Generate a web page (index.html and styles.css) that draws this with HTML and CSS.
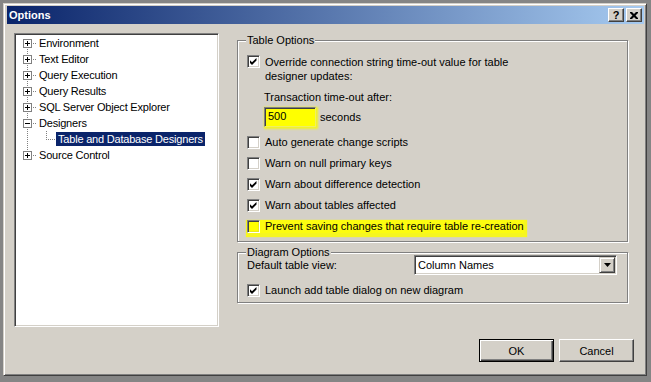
FILE: index.html
```html
<!DOCTYPE html>
<html>
<head>
<meta charset="utf-8">
<title>Options</title>
<link rel="stylesheet" href="styles.css">
</head>
<body>
<div class="window">
  <div class="titlebar">
    <span class="title">Options</span>
    <div class="caption-btns">
      <span class="cbtn help">?</span>
      <span class="cbtn close"><svg width="8" height="7" viewBox="0 0 8 7"><path d="M0 0h2l2 2 2-2h2v1L5.5 3.5 8 6v1H6L4 5 2 7H0V6l2.5-2.5L0 1z"/></svg></span>
    </div>
  </div>

  <div class="main">
    <div class="tree">
      <ul class="tree-list">
        <li class="node"><span class="twig first"><span class="box plus"></span></span><span class="label">Environment</span></li>
        <li class="node"><span class="twig"><span class="box plus"></span></span><span class="label">Text Editor</span></li>
        <li class="node"><span class="twig"><span class="box plus"></span></span><span class="label">Query Execution</span></li>
        <li class="node"><span class="twig"><span class="box plus"></span></span><span class="label">Query Results</span></li>
        <li class="node"><span class="twig"><span class="box plus"></span></span><span class="label">SQL Server Object Explorer</span></li>
        <li class="node"><span class="twig"><span class="box"></span></span><span class="label">Designers</span></li>
        <li class="node"><span class="indent"></span><span class="twig last"></span><span class="label selected">Table and Database Designers</span></li>
        <li class="node"><span class="twig last"><span class="box plus"></span></span><span class="label">Source Control</span></li>
      </ul>
    </div>

    <div class="right">
      <fieldset class="group g1">
        <legend>Table Options</legend>
        <div class="check-row override">
          <span class="cb"><svg width="7" height="7" viewBox="0 0 7 7"><path d="M0 2.2l2 2L6.5 0v2.6L2 7 0 5z"/></svg></span>
          <span class="text">Override connection string time-out value for table<br>designer updates:</span>
        </div>
        <div class="timeout">
          <div>Transaction time-out after:</div>
          <div class="timeout-input"><span class="textbox">500</span><span>seconds</span></div>
        </div>
        <div class="check-list">
          <div class="check-row"><span class="cb"></span><span class="text">Auto generate change scripts</span></div>
          <div class="check-row"><span class="cb"></span><span class="text">Warn on null primary keys</span></div>
          <div class="check-row"><span class="cb"><svg width="7" height="7" viewBox="0 0 7 7"><path d="M0 2.2l2 2L6.5 0v2.6L2 7 0 5z"/></svg></span><span class="text">Warn about difference detection</span></div>
          <div class="check-row"><span class="cb"><svg width="7" height="7" viewBox="0 0 7 7"><path d="M0 2.2l2 2L6.5 0v2.6L2 7 0 5z"/></svg></span><span class="text">Warn about tables affected</span></div>
          <div class="check-row hl"><span class="cb"></span><span class="text">Prevent saving changes that require table re-creation</span></div>
        </div>
      </fieldset>

      <fieldset class="group g2">
        <legend>Diagram Options</legend>
        <div class="view-row">
          <span class="view-label">Default table view:</span>
          <div class="combo">
            <span class="combo-text">Column Names</span>
            <span class="combo-btn"><svg width="7" height="4" viewBox="0 0 7 4"><path d="M0 0h7L3.5 4z"/></svg></span>
          </div>
        </div>
        <div class="check-row launch"><span class="cb"><svg width="7" height="7" viewBox="0 0 7 7"><path d="M0 2.2l2 2L6.5 0v2.6L2 7 0 5z"/></svg></span><span class="text">Launch add table dialog on new diagram</span></div>
      </fieldset>
    </div>
  </div>

  <div class="footer">
    <button class="btn default">OK</button>
    <button class="btn">Cancel</button>
  </div>
</div>
</body>
</html>
```
FILE: styles.css
```css
* { box-sizing: border-box; }
html, body { margin: 0; height: 100%; }
body {
  background: #858585;
  font: 11px/13px "Liberation Sans", Arial, sans-serif;
  color: #000;
  overflow: hidden;
}

.window {
  margin: 3px 0 0 3px;
  width: 644px;
  height: 373px;
  background: #d4d0c8;
  border: 1px solid;
  border-color: #d4d0c8 #404040 #404040 #d4d0c8;
  box-shadow: inset 1px 1px #fff, inset -1px -1px #808080;
  padding: 2px 2px 2px 3px;
  display: flex;
  flex-direction: column;
}

/* title bar */
.titlebar {
  flex: none;
  height: 18px;
  background: linear-gradient(to right, #0a246a, #a6caf0);
  display: flex;
  align-items: center;
  justify-content: space-between;
  padding: 0 2px;
}
.title { color: #fff; font-weight: bold; font-size: 11px; }
.caption-btns { display: flex; gap: 2px; }
.cbtn {
  width: 16px;
  height: 14px;
  background: #d4d0c8;
  border: 1px solid;
  border-color: #fff #404040 #404040 #fff;
  box-shadow: inset -1px -1px #808080;
  display: flex;
  align-items: center;
  justify-content: center;
  font: bold 11px/1 "Liberation Sans", Arial, sans-serif;
}
.cbtn svg { display: block; }

/* main area */
.main {
  flex: none;
  display: flex;
  gap: 18px;
  padding: 9px 0 0 7px;
}

/* tree */
.tree {
  flex: none;
  width: 205px;
  height: 294px;
  background: #fff;
  border: 1px solid;
  border-color: #808080 #fff #fff #808080;
  box-shadow: inset 1px 1px #404040, inset -1px -1px #d4d0c8;
  padding: 1px;
}
.tree-list { list-style: none; margin: 0; padding: 0 0 0 7px; }
.node { display: flex; align-items: center; height: 16px; }
.twig, .indent { flex: none; position: relative; height: 16px; }
.twig {
  width: 14px;
  background:
    repeating-linear-gradient(to right, #808080 0 1px, transparent 1px 2px) 4px 8px / 10px 1px no-repeat,
    repeating-linear-gradient(#808080 0 1px, transparent 1px 2px) 4px 0 / 1px 16px no-repeat;
}
.twig.first {
  background:
    repeating-linear-gradient(to right, #808080 0 1px, transparent 1px 2px) 4px 8px / 10px 1px no-repeat,
    repeating-linear-gradient(#808080 0 1px, transparent 1px 2px) 4px 8px / 1px 8px no-repeat;
}
.twig.last {
  background:
    repeating-linear-gradient(to right, #808080 0 1px, transparent 1px 2px) 4px 8px / 10px 1px no-repeat,
    repeating-linear-gradient(#808080 0 1px, transparent 1px 2px) 4px 0 / 1px 8px no-repeat;
}
.indent {
  width: 19px;
  background: repeating-linear-gradient(#808080 0 1px, transparent 1px 2px) 4px 0 / 1px 16px no-repeat;
}
.box {
  position: absolute;
  left: 0;
  top: 4px;
  width: 9px;
  height: 9px;
  border: 1px solid #808080;
  background: #fff;
}
.box::before {
  content: "";
  position: absolute;
  left: 1px;
  top: 3px;
  width: 5px;
  height: 1px;
  background: #000;
}
.box.plus::after {
  content: "";
  position: absolute;
  left: 3px;
  top: 1px;
  width: 1px;
  height: 5px;
  background: #000;
}
.label { padding: 0 2px; line-height: 14px; white-space: nowrap; letter-spacing: -0.2px; }
.label.selected { background: #0a246a; color: #fff; }

/* right side */
.right {
  flex: none;
  width: 391px;
  display: flex;
  flex-direction: column;
  gap: 4px;
  padding-top: 1px;
}
.group {
  margin: 0;
  min-width: 0;
  border: 1px solid #808080;
  box-shadow: inset 1px 1px #fff, 1px 1px #fff;
  padding: 0 9px 8px 9px;
}
.group legend {
  padding: 0 1px;
  margin-left: -1px;
  line-height: 13px;
  background: #d4d0c8;
}

.check-row { display: flex; align-items: flex-start; gap: 5px; }
.check-row .text { line-height: 13px; white-space: nowrap; }
.cb {
  flex: none;
  width: 13px;
  height: 13px;
  background: #fff;
  border: 1px solid;
  border-color: #808080 #fff #fff #808080;
  box-shadow: inset 1px 1px #404040, inset -1px -1px #d4d0c8;
  display: flex;
  align-items: center;
  justify-content: center;
}
.cb svg { display: block; }

.override { margin-top: 8px; }
.override .text { line-height: 14px; }

.timeout { padding-left: 17px; margin-top: 8px; }
.timeout-input { display: flex; align-items: center; gap: 4px; margin-top: 3px; }
.textbox {
  width: 52px;
  height: 20px;
  padding: 0 3px;
  line-height: 16px;
  background: #ffff00;
  border: 1px solid;
  border-color: #808080 #f0f060 #f0f060 #808080;
  box-shadow: inset 1px 1px #404040, 1px 1px 2px 1px #f4f420;
}

.check-list { margin-top: 9px; display: flex; flex-direction: column; gap: 8px; }
.check-row.hl {
  align-self: flex-start;
  background: #fcfc10;
  box-shadow: 1px 2px 1px 2px #f6f620;
}
.check-row.hl .cb { background: #ffff00; box-shadow: inset 1px 1px #404040, inset -1px -1px #e8e820; }

/* diagram options */
.g2 { padding-bottom: 5px; }
.view-row { display: flex; align-items: center; height: 20px; margin-top: -4px; }
.view-label { width: 167px; flex: none; }
.combo {
  width: 203px;
  height: 20px;
  background: #fff;
  border: 1px solid;
  border-color: #808080 #fff #fff #808080;
  box-shadow: inset 1px 1px #404040, inset -1px -1px #d4d0c8;
  padding: 1px;
  display: flex;
  align-items: center;
}
.combo-text { flex: 1; padding-left: 2px; }
.combo-btn {
  flex: none;
  width: 16px;
  height: 16px;
  background: #d4d0c8;
  border: 1px solid;
  border-color: #d4d0c8 #404040 #404040 #d4d0c8;
  box-shadow: inset 1px 1px #fff, inset -1px -1px #808080;
  display: flex;
  align-items: center;
  justify-content: center;
}
.combo-btn svg { display: block; }
.launch { margin-top: 9px; }

/* footer */
.footer {
  display: flex;
  justify-content: flex-end;
  gap: 5px;
  margin-top: 12px;
  padding-right: 10px;
}
.btn {
  width: 75px;
  height: 23px;
  padding: 0;
  font: 11px "Liberation Sans", Arial, sans-serif;
  color: #000;
  background: #d4d0c8;
  border: 1px solid;
  border-color: #fff #404040 #404040 #fff;
  box-shadow: inset -1px -1px #808080;
}
.btn.default {
  border-color: #000;
  box-shadow: inset 1px 1px #fff, inset -1px -1px #404040, inset -2px -2px #808080;
}
```
